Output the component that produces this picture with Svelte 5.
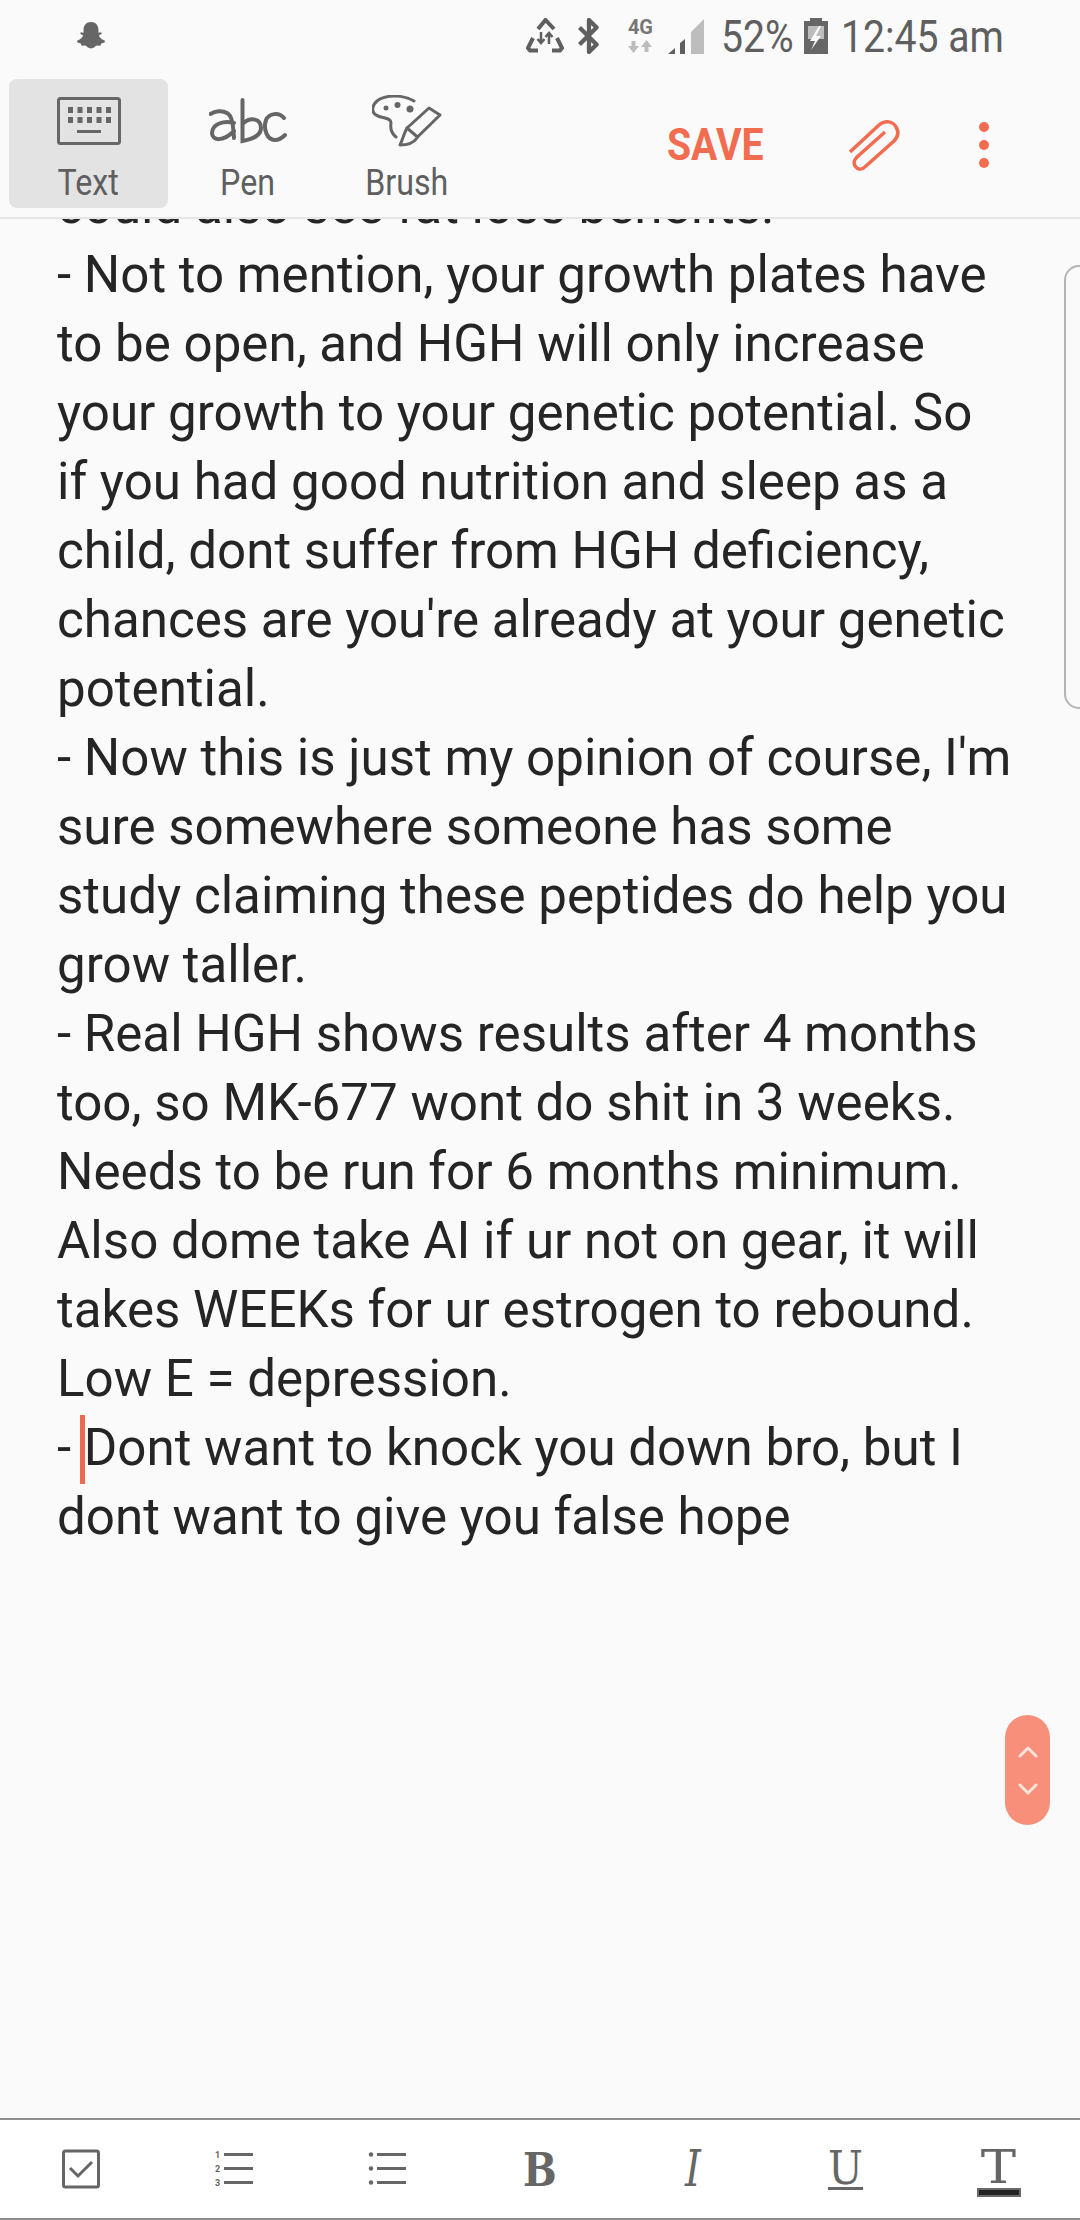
<script>
  const lines = [
    'could also see fat loss benefits.',
    '- Not to mention, your growth plates have',
    'to be open, and HGH will only increase',
    'your growth to your genetic potential. So',
    'if you had good nutrition and sleep as a',
    'child, dont suffer from HGH deficiency,',
    "chances are you're already at your genetic",
    'potential.',
    "- Now this is just my opinion of course, I'm",
    'sure somewhere someone has some',
    'study claiming these peptides do help you',
    'grow taller.',
    '- Real HGH shows results after 4 months',
    'too, so MK-677 wont do shit in 3 weeks.',
    'Needs to be run for 6 months minimum.',
    'Also dome take AI if ur not on gear, it will',
    'takes WEEKs for ur estrogen to rebound.',
    'Low E = depression.'
  ];
</script>

<div class="page">
  <div class="status">
    <svg width="30" height="28" viewBox="0 0 32 30">
      <path d="M16 0c5 0 8 3.600 8 8.500v3l3-.5 .5 1.500-3 2c.8 2.500 3 4.500 6.500 5.500l-.5 2-3.500 1-1 2.500-3.500-.2c-2 .4-3.500 3.200-6.500 3.200s-4.500-2.800-6.500-3.200l-3.500.2-1-2.500-3.500-1-.5-2c3.500-1 5.700-3 6.500-5.500l-3-2 .5-1.500 3 .5v-3C8 3.600 11 0 16 0z" fill="#666"/>
    </svg>
    <div class="status-right">
      <svg width="38" height="36" viewBox="0 0 38 36" fill="none" stroke="#5f5f5f" stroke-width="4">
        <path d="M12 11l7.500-9L28 11M7 20L2 30l2 2.500h8M26 32.500h8l2-2.500-5-10"/>
        <path d="M15 14v11M11.500 21l3.500 4 3.500-4M23 26V15M19.500 19l3.500-4 3.500 4" stroke-width="2.500"/>
      </svg>
      <svg width="23" height="36" viewBox="0 0 23 38" fill="none" stroke="#5f5f5f" stroke-width="4.500" stroke-linejoin="round">
        <path d="M2 10l18 18-8 8V2l8 8L2 28"/>
      </svg>
      <div class="net">
        <span>4G</span>
        <svg width="24" height="13" viewBox="0 0 24 13" fill="#bdbdbd"><path d="M0 6h3.500V1h4v5H11l-5.500 7zM13 7l5.500-7L24 7h-3.500v5h-4V7z"/></svg>
      </div>
      <svg width="36" height="35" viewBox="0 0 36 35">
        <path d="M23 13L36 0v35H23z" fill="#bdbdbd"/>
        <path d="M0 35l7-6v6zM12 24l5-4v15h-5z" fill="#5f5f5f"/>
      </svg>
      <span class="st-text pct">52%</span>
      <svg width="24" height="36" viewBox="0 0 24 36">
        <path d="M6 0h12v3h6v33H0V3h6z" fill="#666"/>
        <path d="M4 8h16v13H4z" fill="#bdbdbd"/>
        <path d="M15 8l-9 15h5l-4 9 10-14h-5l5-10z" fill="#fafafa"/>
      </svg>
      <span class="st-text time">12:45 am</span>
    </div>
  </div>

  <div class="toolbar">
    <div class="tool active">
      <div class="tool-icon">
        <svg width="64" height="48" viewBox="0 0 64 48" fill="none">
          <rect x="1.500" y="1.500" width="61" height="45" rx="2" stroke="#666" stroke-width="3"/>
          <path d="M11 10h5v6h-5zM20.500 10h5v6h-5zM30 10h5v6h-5zM39.500 10h5v6h-5zM49 10h5v6h-5zM11 20h5v6h-5zM20.500 20h5v6h-5zM30 20h5v6h-5zM39.500 20h5v6h-5zM49 20h5v6h-5zM20 33h24v3H20z" fill="#666"/>
        </svg>
      </div>
      <span class="label">Text</span>
    </div>
    <div class="tool">
      <div class="tool-icon">
        <svg width="78" height="46" viewBox="0 0 78 46" fill="none" stroke="#666" stroke-width="4" stroke-linecap="round">
          <path d="M1.500 16C6 13 13 12 18 15c5 3 6 10 7 25M25 25C15 22 3 26 3 35c0 8 11 9 22-2"/>
          <path d="M33.500 2v41c10-2 18.500-5 18.500-13 0-9-10-12-18.500-4"/>
          <path d="M75 20c-5-6-15-5-18 2-3 9 1 20 9 20 4 0 7-2 10-5"/>
        </svg>
      </div>
      <span class="label">Pen</span>
    </div>
    <div class="tool">
      <div class="tool-icon">
        <svg width="70" height="52" viewBox="0 0 70 52" fill="none" stroke="#666" stroke-width="3" stroke-linejoin="round" stroke-linecap="round">
          <path d="M42 6C32 0 14-1 5 6 0 10-1 17 4 20c6 4 15 2 15 8-1 6 0 10 5 14"/>
          <path d="M57 13l11 7-22.500 22L35 33z"/>
          <path d="M35 33c-3 5-4 11-7 17 6 0 13-1 17-7"/>
          <circle cx="14" cy="13" r="2.500" fill="#666" stroke="none"/>
          <circle cx="25.500" cy="10" r="3" fill="#666" stroke="none"/>
          <circle cx="38" cy="14" r="3.500" fill="#666" stroke="none"/>
        </svg>
      </div>
      <span class="label">Brush</span>
    </div>
    <span class="save">SAVE</span>
    <svg class="clip" width="51" height="52" viewBox="0 0 51 52" fill="none" stroke="#f26c50" stroke-width="3.500">
      <path d="M1 33L30 6c6-5 14-4 17 2 3 5 2 10-2 14L17 47c-4 4-8 4-10 1-3-3-2-7 1-10L36 13"/>
    </svg>
    <div class="dots"><i></i><i></i><i></i></div>
  </div>
  <div class="rule"></div>

  <div class="content">
    <div class="note">
      {#each lines as line}
        <div class="line">{line}</div>
      {/each}
      <div class="line">- <span class="caret-wrap"><span class="caret"></span></span>Dont want to knock you down bro, but I</div>
      <div class="line">dont want to give you false hope</div>
    </div>
    <div class="handle"></div>
    <div class="scroller">
      <svg width="20" height="12" viewBox="0 0 20 12" fill="none" stroke="#fde3dc" stroke-width="3" stroke-linecap="round" stroke-linejoin="round"><path d="M2 10l8-8 8 8"/></svg>
      <svg width="20" height="12" viewBox="0 0 20 12" fill="none" stroke="#fde3dc" stroke-width="3" stroke-linecap="round" stroke-linejoin="round"><path d="M2 2l8 8 8-8"/></svg>
    </div>
  </div>

  <div class="format">
    <div class="fmt">
      <svg width="40" height="40" viewBox="0 0 40 40" fill="none" stroke="#666">
        <rect x="2.500" y="2" width="35" height="36" rx="2" stroke-width="3"/>
        <path d="M9 19l8 8 14-14" stroke-width="3"/>
      </svg>
    </div>
    <div class="fmt">
      <svg width="38" height="38" viewBox="0 0 38 38" fill="#666">
        <path d="M9 3h29v3H9zM9 17h29v3H9zM9 31h29v3H9z"/>
        <text x="0" y="8" class="num">1</text><text x="0" y="22" class="num">2</text><text x="0" y="36" class="num">3</text>
      </svg>
    </div>
    <div class="fmt">
      <svg width="38" height="38" viewBox="0 0 38 38" fill="#666">
        <circle cx="3" cy="4.500" r="2.200"/><circle cx="3" cy="18.500" r="2.200"/><circle cx="3" cy="32.500" r="2.200"/>
        <path d="M9 3h29v3H9zM9 17h29v3H9zM9 31h29v3H9z"/>
      </svg>
    </div>
    <div class="fmt"><span class="glyph bold">B</span></div>
    <div class="fmt"><span class="glyph ital">I</span></div>
    <div class="fmt"><span class="glyph under">U</span></div>
    <div class="fmt">
      <div class="color-t">
        <span class="glyph tee">T</span>
        <div class="swatch"></div>
      </div>
    </div>
  </div>
</div>

<style>
  :global(body) {
    margin: 0;
    background: #fafafa;
  }
  .page {
    width: 1080px;
    height: 2220px;
    display: flex;
    flex-direction: column;
    overflow: hidden;
    background: #fafafa;
    font-family: Roboto, sans-serif;
  }
  .status {
    height: 72px;
    flex: none;
    display: flex;
    align-items: center;
    justify-content: space-between;
    padding: 0 79px 0 76px;
  }
  .status-right {
    display: flex;
    align-items: center;
    gap: 13px;
  }
  .st-text {
    font-size: 45px;
    color: #5f5f5f;
    display: inline-block;
    white-space: nowrap;
    transform: scaleX(.87);
    transform-origin: left center;
  }
  .pct {
    width: 70px;
    margin-left: 4px;
  }
  .time { width: 160px; }
  .net {
    display: flex;
    flex-direction: column;
    align-items: center;
    margin: 0 2px 0 15px;
    gap: 5px;
  }
  .net span {
    font-size: 20px;
    font-weight: 700;
    line-height: 16px;
    color: #777;
  }
  .toolbar {
    flex: none;
    height: 145px;
    display: flex;
    align-items: center;
    padding-left: 9px;
  }
  .tool {
    width: 159px;
    height: 129px;
    align-self: flex-start;
    margin-top: 7px;
    border-radius: 8px;
    display: flex;
    flex-direction: column;
    align-items: center;
    box-sizing: border-box;
    padding-top: 16px;
  }
  .tool.active { background: #e3e3e3; }
  .tool-icon {
    height: 52px;
    display: flex;
    align-items: center;
  }
  .label {
    margin-top: 16px;
    font-size: 37px;
    line-height: 40px;
    color: #5f5f5f;
    transform: scaleX(.87);
  }
  .save {
    margin-left: 181px;
    width: 94px;
    font-size: 45px;
    font-weight: 700;
    color: #f26c50;
    white-space: nowrap;
    transform: scaleX(.87);
    transform-origin: left center;
  }
  .clip { margin-left: 88px; }
  .dots {
    margin-left: 79px;
    display: flex;
    flex-direction: column;
    gap: 8px;
  }
  .dots i {
    display: block;
    width: 10px;
    height: 10px;
    border-radius: 50%;
    background: #f26c50;
  }
  .rule {
    flex: none;
    height: 2px;
    background: #e6e6e6;
  }
  .content {
    flex: 1;
    position: relative;
    overflow: hidden;
  }
  .note {
    margin-top: -48px;
    padding-left: 57px;
    font-size: 51.1px;
    line-height: 69px;
    color: #252525;
    white-space: nowrap;
  }
  .caret-wrap {
    position: relative;
  }
  .caret {
    position: absolute;
    left: -4px;
    top: -3px;
    width: 5px;
    height: 69px;
    background: #ec6a52;
  }
  .handle {
    position: absolute;
    left: 1064px;
    top: 46px;
    width: 30px;
    height: 444px;
    box-sizing: border-box;
    border: 2px solid #b4b4b4;
    border-radius: 16px;
  }
  .scroller {
    position: absolute;
    left: 1005px;
    top: 1496px;
    width: 45px;
    height: 110px;
    border-radius: 23px;
    background: #f88f7b;
    display: flex;
    flex-direction: column;
    align-items: center;
    justify-content: center;
    gap: 25px;
  }
  .format {
    flex: none;
    height: 98px;
    border-top: 2px solid #8e8e8e;
    border-bottom: 2px solid #8e8e8e;
    background: #fff;
    display: grid;
    grid-template-columns: repeat(7, 153px);
    padding-left: 4px;
  }
  .fmt {
    display: flex;
    align-items: center;
    justify-content: center;
  }
  .num {
    font-size: 9px;
    font-family: Roboto, sans-serif;
    font-weight: 700;
  }
  .glyph {
    color: #666;
    font-family: "DejaVu Serif", serif;
    line-height: 1;
  }
  .bold {
    font-size: 47px;
    font-weight: 700;
    transform: scaleX(.85);
  }
  .ital {
    font-size: 50px;
    font-style: italic;
    transform: scaleX(.8);
  }
  .under {
    font-size: 46px;
    line-height: 38px;
    border-bottom: 3px solid #666;
    transform: scaleX(.9);
  }
  .color-t {
    display: flex;
    flex-direction: column;
    align-items: center;
    margin-top: 6px;
  }
  .tee {
    font-size: 46px;
    line-height: 38px;
    transform: scaleX(1.15);
  }
  .swatch {
    width: 44px;
    height: 9px;
    margin-top: 2px;
    box-sizing: border-box;
    background: #222;
    border: 2px solid #6a6a6a;
  }
</style>
